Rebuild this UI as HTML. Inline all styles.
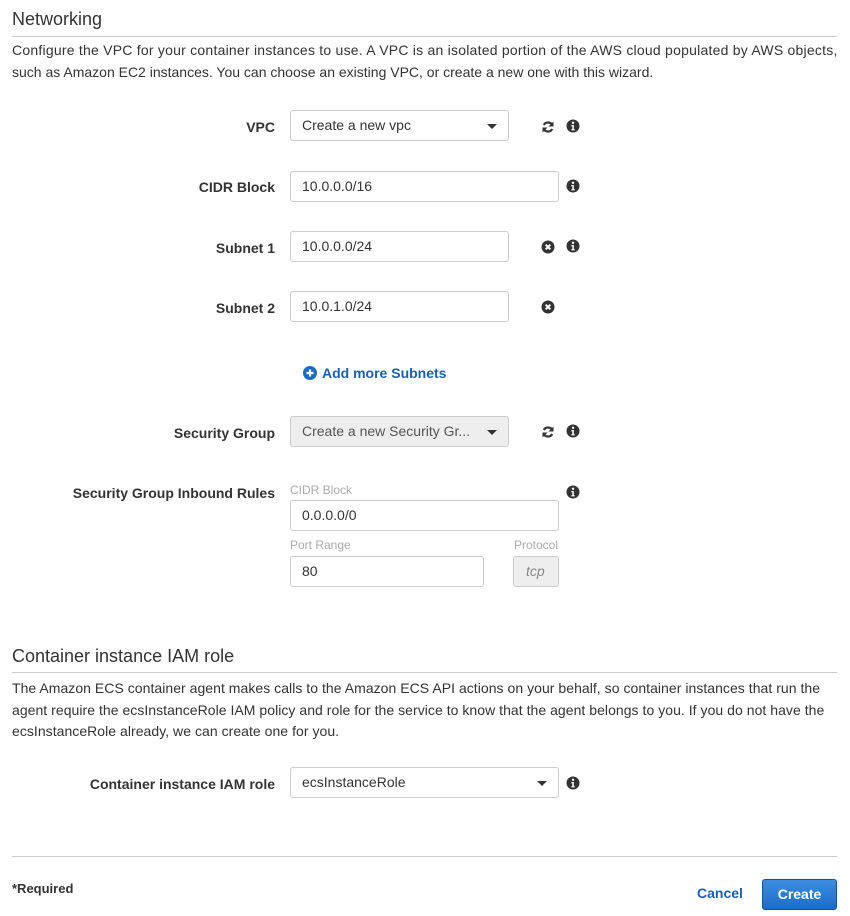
<!DOCTYPE html>
<html><head><meta charset="utf-8"><style>
*{box-sizing:border-box;margin:0;padding:0}
body{width:850px;height:916px;background:#fff;font-family:"Liberation Sans",Arial,sans-serif;color:#333;position:relative;overflow:hidden;font-size:14px}
.a{position:absolute;white-space:nowrap}
h2{position:absolute;font-weight:normal;font-size:18px;color:#333;left:12px}
.hr{position:absolute;left:12px;width:825px;height:1px;background:#ccc}
.p{position:absolute;left:12px;font-size:14px;line-height:21.5px;white-space:nowrap;color:#333}
.lbl{position:absolute;right:575px;font-weight:bold;font-size:14px;color:#333;white-space:nowrap}
.in{position:absolute;border:1px solid #ccc;border-radius:3px;background:#fff;padding-left:11px;font-size:14px;line-height:29px;color:#333}
.sel:after{content:"";position:absolute;right:11px;top:13px;border-left:5px solid transparent;border-right:5px solid transparent;border-top:5px solid #333}
.sm{position:absolute;font-size:12px;color:#aaa}
.ic{position:absolute;width:14px;height:14px}
</style></head><body>
<h2 style="top:9px">Networking</h2>
<div class="hr" style="top:36px"></div>
<div class="p" style="top:40px"><span style="letter-spacing:0.23px">Configure the VPC for your container instances to use. A VPC is an isolated portion of the AWS cloud populated by AWS objects,</span><br>such as Amazon EC2 instances. You can choose an existing VPC, or create a new one with this wizard.</div>

<div class="lbl" style="top:119px">VPC</div>
<div class="in sel" style="left:290px;top:110px;width:219px;height:31px">Create a new vpc</div>

<div class="lbl" style="top:179px">CIDR Block</div>
<div class="in" style="left:290px;top:171px;width:269px;height:31px">10.0.0.0/16</div>

<div class="lbl" style="top:240px">Subnet 1</div>
<div class="in" style="left:290px;top:231px;width:219px;height:31px">10.0.0.0/24</div>

<div class="lbl" style="top:300px">Subnet 2</div>
<div class="in" style="left:290px;top:291px;width:219px;height:31px">10.0.1.0/24</div>

<div class="a" style="left:303px;top:365px;color:#1a5fb4;font-weight:bold;font-size:14px">
<svg width="14" height="14" viewBox="0 0 14 14" style="vertical-align:-2px;margin-right:5px"><circle cx="7" cy="7" r="7" fill="#1a6cc8"/><path d="M7 3.5v7M3.5 7h7" stroke="#fff" stroke-width="2.2"/></svg>Add more Subnets</div>

<div class="lbl" style="top:425px">Security Group</div>
<div class="in sel" style="left:290px;top:416px;width:219px;height:31px;background:#eee;color:#555">Create a new Security Gr...</div>

<div class="lbl" style="top:485px">Security Group Inbound Rules</div>
<div class="sm" style="left:290px;top:483px">CIDR Block</div>
<div class="in" style="left:290px;top:500px;width:269px;height:31px">0.0.0.0/0</div>
<div class="sm" style="left:290px;top:538px">Port Range</div>
<div class="sm" style="left:514px;top:538px">Protocol</div>
<div class="in" style="left:290px;top:556px;width:194px;height:31px">80</div>
<div class="in" style="left:513px;top:556px;width:46px;height:31px;background:#eee;color:#888;font-style:italic;padding-left:12px">tcp</div>

<h2 style="top:646px">Container instance IAM role</h2>
<div class="hr" style="top:672px"></div>
<div class="p" style="top:678px;letter-spacing:0.04px">The Amazon ECS container agent makes calls to the Amazon ECS API actions on your behalf, so container instances that run the<br>agent require the ecsInstanceRole IAM policy and role for the service to know that the agent belongs to you. If you do not have the<br>ecsInstanceRole already, we can create one for you.</div>

<div class="lbl" style="top:776px">Container instance IAM role</div>
<div class="in sel" style="left:290px;top:767px;width:269px;height:31px">ecsInstanceRole</div>

<div class="hr" style="top:856px"></div>
<div class="a" style="left:12px;top:881px;font-weight:bold;font-size:13px">*Required</div>
<div class="a" style="left:697px;top:885px;font-weight:bold;color:#1a5fb4;font-size:14px">Cancel</div>
<div class="a" style="left:762px;top:879px;width:75px;height:31px;border-radius:3px;background:linear-gradient(#3d8ee0,#1a6cc8);border:1px solid #15549c;color:#fff;font-weight:bold;font-size:14px;text-align:center;line-height:29px">Create</div>

<svg width="0" height="0" style="position:absolute"><defs>
<g id="info"><circle cx="7" cy="7" r="6.5" fill="#333"/><circle cx="7" cy="3.8" r="1.2" fill="#fff"/><path d="M5.3 6h2.5v4.2h1v1.2H5.3v-1.2h1V7.2h-1z" fill="#fff"/></g>
<g id="x"><circle cx="7" cy="7" r="6.5" fill="#333"/><path d="M4.7 4.7l4.6 4.6M9.3 4.7l-4.6 4.6" stroke="#fff" stroke-width="2"/></g>
<g id="rf"><path d="M11.5 5.5A4.8 4.8 0 0 0 2.8 5" fill="none" stroke="#333" stroke-width="2.2"/><path d="M12.5 1.5v5h-5z" fill="#333"/><path d="M2.5 8.5A4.8 4.8 0 0 0 11.2 9" fill="none" stroke="#333" stroke-width="2.2"/><path d="M1.5 12.5v-5h5z" fill="#333"/></g>
</defs></svg>
<svg class="ic" style="left:541px;top:120px" viewBox="0 0 14 14"><use href="#rf"/></svg>
<svg class="ic" style="left:566px;top:119px" viewBox="0 0 14 14"><use href="#info"/></svg>
<svg class="ic" style="left:566px;top:179px" viewBox="0 0 14 14"><use href="#info"/></svg>
<svg class="ic" style="left:541px;top:240px" viewBox="0 0 14 14"><use href="#x"/></svg>
<svg class="ic" style="left:566px;top:239px" viewBox="0 0 14 14"><use href="#info"/></svg>
<svg class="ic" style="left:541px;top:300px" viewBox="0 0 14 14"><use href="#x"/></svg>
<svg class="ic" style="left:541px;top:425px" viewBox="0 0 14 14"><use href="#rf"/></svg>
<svg class="ic" style="left:566px;top:424px" viewBox="0 0 14 14"><use href="#info"/></svg>
<svg class="ic" style="left:566px;top:485px" viewBox="0 0 14 14"><use href="#info"/></svg>
<svg class="ic" style="left:566px;top:776px" viewBox="0 0 14 14"><use href="#info"/></svg>
</body></html>
